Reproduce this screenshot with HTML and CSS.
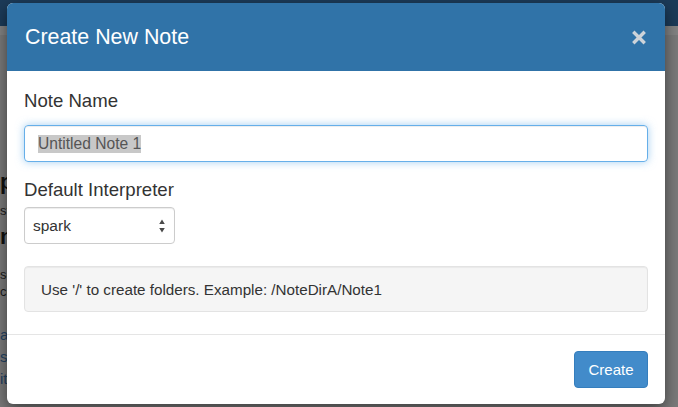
FILE: index.html
```html
<!DOCTYPE html>
<html lang="en">
<head>
<meta charset="utf-8">
<title>Create New Note</title>
<link rel="stylesheet" href="styles.css">
</head>
<body>
<div class="page">
  <header class="navbar"></header>
  <div class="subbar"></div>
  <main class="content">
    <h3 class="bg-head bg-head-1">p</h3>
    <p class="bg-text bg-text-1">st</p>
    <h3 class="bg-head bg-head-2">n</h3>
    <p class="bg-text bg-text-2">se</p>
    <p class="bg-text">co</p>
    <ul class="bg-links">
      <li>a</li>
      <li>s</li>
      <li>it</li>
    </ul>
  </main>
</div>

<div class="modal" role="dialog" aria-labelledby="modal-title">
  <div class="modal-header">
    <h4 class="modal-title" id="modal-title">Create New Note</h4>
    <button class="close" aria-label="Close">
      <svg width="14" height="15" viewBox="0 0 14 15"><path d="M2.5 3 L11.5 12 M11.5 3 L2.5 12" stroke="#cdd3d9" stroke-width="3.4" stroke-linecap="square"/></svg>
    </button>
  </div>
  <div class="modal-body">
    <label class="lbl lbl-name">Note Name</label>
    <div class="input" role="textbox"><span class="sel">Untitled Note 1</span></div>
    <label class="lbl lbl-interp">Default Interpreter</label>
    <div class="select" role="listbox">
      <span>spark</span>
      <svg class="arrows" width="6" height="14" viewBox="0 0 6 14"><path d="M3 0.5 L5.8 5 L0.2 5 Z M3 13.5 L5.8 9 L0.2 9 Z" fill="#4a4a4a"/></svg>
    </div>
    <div class="well">Use '/' to create folders. Example: /NoteDirA/Note1</div>
  </div>
  <div class="modal-footer">
    <button class="btn">Create</button>
  </div>
</div>
</body>
</html>
```

FILE: styles.css
```css
html, body {
  margin: 0;
  padding: 0;
}
body {
  width: 678px;
  height: 407px;
  overflow: hidden;
  background: #7a7a7a;
  font-family: "Liberation Sans", Arial, sans-serif;
  position: relative;
}
.page {
  display: flex;
  flex-direction: column;
}
.navbar {
  height: 26px;
  background: #1c3b59;
}
.subbar {
  height: 9px;
  background: #838383;
}
.content {
  padding: 0;
  margin-top: 135px;
}
.bg-head {
  margin: 0;
  font-size: 22px;
  line-height: 24px;
  font-weight: bold;
  color: #111;
}
.bg-head-2 { margin-top: 6px; }
.bg-text {
  margin: 0;
  font-size: 13px;
  line-height: 17px;
  color: #1a1a1a;
}
.bg-text-1 { margin-top: 8px; }
.bg-text-2 { margin-top: 17px; }
.bg-links {
  list-style: none;
  margin: 24px 0 0;
  padding: 0;
  font-size: 15px;
  line-height: 22px;
  color: #234263;
}

.modal {
  position: absolute;
  left: 7px;
  top: 3px;
  width: 658px;
  background: #fff;
  border-radius: 6px;
  overflow: hidden;
  box-shadow: 0 5px 15px rgba(0, 0, 0, 0.5);
}
.modal-header {
  height: 68px;
  background: #3073a8;
  display: flex;
  align-items: center;
  justify-content: space-between;
  padding: 0 19px 0 18px;
}
.modal-title {
  margin: 0;
  color: #fff;
  font-size: 21.4px;
  font-weight: normal;
}
.close {
  background: none;
  border: 0;
  padding: 0;
  width: 14px;
  height: 15px;
  display: flex;
}
.modal-body {
  padding: 19px 17px 22px;
  display: flex;
  flex-direction: column;
  align-items: flex-start;
}
.lbl {
  display: block;
  font-size: 18.6px;
  line-height: 22px;
  color: #333;
}
.lbl-name { margin: 0 0 13px; }
.lbl-interp { margin: 17px 0 6px; }
.input {
  box-sizing: border-box;
  width: 100%;
  height: 37px;
  border: 1px solid #66afe9;
  border-radius: 4px;
  box-shadow: inset 0 1px 1px rgba(0, 0, 0, 0.075), 0 0 8px rgba(102, 175, 233, 0.6);
  padding: 0 13px;
  display: flex;
  align-items: center;
  font-size: 15.6px;
  color: #555;
}
.sel {
  background: #c8c8c8;
  line-height: 18px;
}
.select {
  box-sizing: border-box;
  width: 151px;
  height: 37px;
  border: 1px solid #ccc;
  border-radius: 4px;
  box-shadow: inset 0 1px 1px rgba(0, 0, 0, 0.075);
  padding: 0 9px 0 8px;
  display: flex;
  align-items: center;
  justify-content: space-between;
  font-size: 15.5px;
  color: #333;
}
.well {
  box-sizing: border-box;
  margin-top: 22px;
  width: 100%;
  height: 46px;
  background: #f5f5f5;
  border: 1px solid #e3e3e3;
  border-radius: 4px;
  box-shadow: inset 0 1px 1px rgba(0, 0, 0, 0.05);
  padding: 0 16px;
  display: flex;
  align-items: center;
  font-size: 15.2px;
  color: #333;
}
.modal-footer {
  border-top: 1px solid #e5e5e5;
  padding: 16px 17px;
  display: flex;
  justify-content: flex-end;
}
.btn {
  box-sizing: border-box;
  width: 74px;
  height: 37px;
  background: #428bca;
  border: 1px solid #357ebd;
  border-radius: 4px;
  color: #fff;
  font-family: "Liberation Sans", Arial, sans-serif;
  font-size: 15px;
  padding: 0;
}
```
